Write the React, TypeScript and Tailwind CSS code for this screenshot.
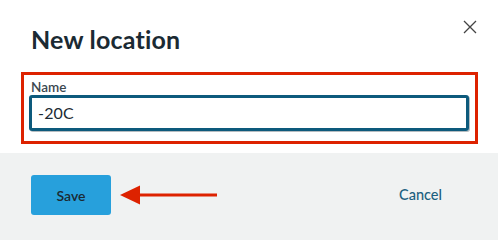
import React from "react";

export default function App() {
  return (
    <div
      className="w-[498px] h-[240px] bg-white flex flex-col overflow-hidden"
      style={{ fontFamily: "Lato, 'Open Sans', sans-serif" }}
    >
      {/* header */}
      <div className="relative h-[72px] px-[31px] pt-[23px]">
        <h2 className="text-[25px] leading-[32px] font-bold text-[#1b2a33] tracking-[0.2px]">New location</h2>
        <button type="button" className="absolute right-[21px] top-[20px] w-[14px] h-[14px] text-[#444]">
          <svg viewBox="0 0 14 14" width="14" height="14" fill="none" stroke="currentColor" strokeWidth="1.3">
            <path d="M1 1 L13 13 M13 1 L1 13" />
          </svg>
        </button>
      </div>

      {/* highlighted field */}
      <div className="px-[21px] pr-[20px] h-[81px]">
        <div className="border-[3px] border-[#dd2200] h-[72px] pl-[5px] pr-[6px] pt-[4px]">
          <label className="block pl-[2px] text-[13.5px] leading-[17px] font-semibold text-[#3b4850]">Name</label>
          <div className="mt-[-1px] h-[36px] rounded-[3px] border-[3px] border-[#0d5a7c] shadow-[1px_1px_0_#b5bcc0] flex items-center px-[6px] text-[16px] tracking-[0.2px] text-[#1b2a33]">
            -20C
          </div>
        </div>
      </div>

      {/* footer */}
      <div className="flex-1 bg-[#f0f2f2] flex items-center px-[31px] pb-[3px]">
        <button
          type="button"
          className="w-[80px] h-[40px] rounded-[3px] bg-[#27a0dc] text-[14px] font-semibold text-[#1b2a33]"
        >
          Save
        </button>
        <svg className="ml-[9px]" width="98" height="20" viewBox="0 0 98 20">
          <polygon points="0,10 20,0.5 20,19.5" fill="#dd2200" />
          <rect x="18" y="8.5" width="79" height="3" fill="#dd2200" />
        </svg>
        <div className="flex-1" />
        <button type="button" className="mr-[25px] text-[14.5px] font-medium text-[#1c5f80]">
          Cancel
        </button>
      </div>
    </div>
  );
}
